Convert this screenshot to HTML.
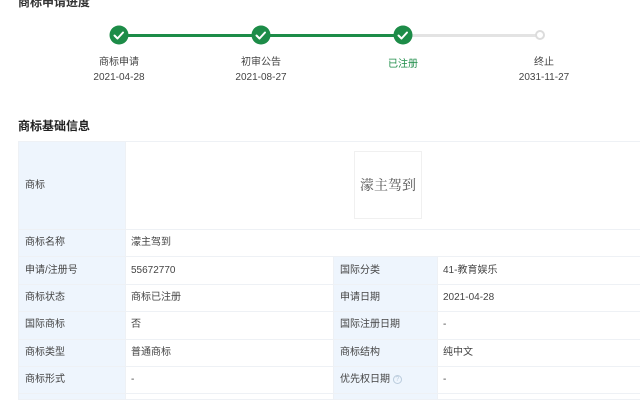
<!DOCTYPE html>
<html><head><meta charset="utf-8"><style>
*{margin:0;padding:0;box-sizing:border-box}
body{width:640px;height:418px;overflow:hidden;background:#fff;font-family:"Liberation Sans","Noto Sans CJK SC",sans-serif;color:#333;font-size:10px;position:relative}
.abs{position:absolute}
.lbl{position:absolute;width:120px;text-align:center;font-size:10px;color:#444;line-height:12px}
table{position:absolute;left:18px;top:141px;border-collapse:collapse;width:640px;table-layout:fixed}
td{border:1px solid #eef1f5;height:27.4px;padding:0 0 0 5px;font-size:10px;line-height:12px;color:#444;vertical-align:middle}
td.k{background:#eef5fd;padding-left:6px}
</style></head><body>
<div class="abs" style="left:18px;top:-7px;font-size:12px;font-weight:bold;color:#333">商标申请进度</div>
<div class="abs" style="left:119px;top:34px;width:284px;height:3px;background:#1d8c48"></div>
<div class="abs" style="left:403px;top:34px;width:137px;height:3px;background:#e3e3e3"></div>
<svg class="abs" style="left:0;top:0" width="640" height="60">
<g fill="#1d8c48"><circle cx="119" cy="35" r="9.5"/><circle cx="261" cy="35" r="9.5"/><circle cx="403" cy="35" r="9.5"/></g>
<g fill="none" stroke="#fff" stroke-width="2" stroke-linecap="round" stroke-linejoin="round"><path d="M114.5 35.5l3 3 5.5-6"/><path d="M256.5 35.5l3 3 5.5-6"/><path d="M398.5 35.5l3 3 5.5-6"/></g>
<circle cx="540" cy="35" r="4" fill="#fff" stroke="#dcdcdc" stroke-width="2"/>
</svg>
<div class="lbl" style="left:59px;top:57px">商标申请</div><div class="lbl" style="left:59px;top:72px">2021-04-28</div>
<div class="lbl" style="left:343px;top:59px;color:#1d8c48">已注册</div>
<div class="lbl" style="left:201px;top:57px">初审公告</div><div class="lbl" style="left:201px;top:72px">2021-08-27</div>
<div class="lbl" style="left:484px;top:57px">终止</div><div class="lbl" style="left:484px;top:72px">2031-11-27</div>
<div class="abs" style="left:18px;top:117px;font-size:12px;font-weight:bold;color:#222">商标基础信息</div>
<table>
<colgroup><col style="width:107px"><col style="width:208px"><col style="width:104px"><col style="width:221px"></colgroup>
<tr><td class="k" style="height:88px">商标</td><td colspan="3" style="position:relative"><div style="position:absolute;left:228px;top:9px;width:68px;height:68px;border:1px solid #f0f0f0;display:flex;align-items:center;justify-content:center;font-family:'Noto Serif CJK SC',serif;font-size:14px;color:#555">濛主驾到</div></td></tr>
<tr><td class="k">商标名称</td><td colspan="3">濛主驾到</td></tr>
<tr><td class="k">申请/注册号</td><td>55672770</td><td class="k">国际分类</td><td>41-教育娱乐</td></tr>
<tr><td class="k">商标状态</td><td>商标已注册</td><td class="k">申请日期</td><td>2021-04-28</td></tr>
<tr><td class="k">国际商标</td><td>否</td><td class="k">国际注册日期</td><td>-</td></tr>
<tr><td class="k">商标类型</td><td>普通商标</td><td class="k">商标结构</td><td>纯中文</td></tr>
<tr><td class="k">商标形式</td><td>-</td><td class="k">优先权日期 <span style="display:inline-block;width:9px;height:9px;border:1px solid #bcd;border-radius:50%;font-size:7px;line-height:7px;text-align:center;color:#bcd;vertical-align:middle">?</span></td><td>-</td></tr>
<tr><td class="k" style="height:6px"></td><td style="height:6px"></td><td class="k" style="height:6px"></td><td style="height:6px"></td></tr>
</table>
</body></html>
